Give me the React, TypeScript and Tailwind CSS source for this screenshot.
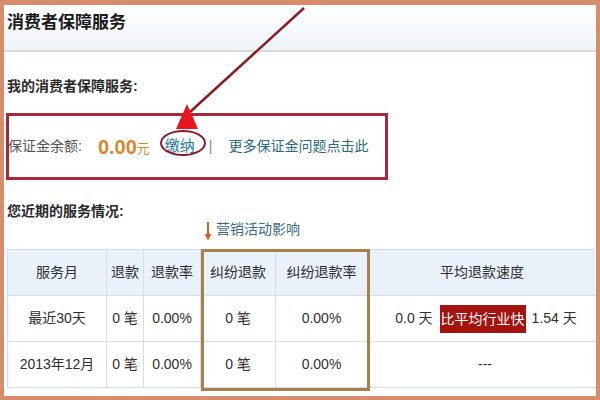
import React from "react";

const font = { fontFamily: '"Liberation Sans", "Noto Sans CJK SC", sans-serif' };

const cols = "grid grid-cols-[99px_37px_57px_75px_92px_228px]";

function Cell({ children, last = false }: { children: React.ReactNode; last?: boolean }) {
  return (
    <div
      className={`flex items-center justify-center h-[46px] border-b border-[#d6dde6] ${
        last ? "" : "border-r"
      } text-[14px] text-[#2e2e2e]`}
    >
      {children}
    </div>
  );
}

export default function App() {
  return (
    <div
      className="relative w-[600px] h-[400px] bg-[#d98c6c] pt-[5px] px-[4px] pb-[4px] overflow-hidden"
      style={font}
    >
      <div className="relative h-full bg-white flex flex-col">
        {/* Header */}
        <div className="h-[47px] pl-[3px] pt-[6px] bg-linear-to-b from-white to-[#eef4fa] border-b-2 border-[#dcdcdc]">
          <div className="text-[17px] leading-[24px] font-bold text-[#1a1a1a]">消费者保障服务</div>
        </div>

        <div className="mt-[24px] pl-[3px] h-[20px] leading-[20px] text-[14px] font-bold text-[#2a2a2a]">
          我的消费者保障服务:
        </div>

        {/* Red box */}
        <div className="mt-[17px] ml-[2px] w-[382px] h-[67px] border-[3px] border-[#a52a3a] flex items-center">
          <span className="ml-[-1px] text-[14px] text-[#555]">保证金余额:</span>
          <span className="ml-[16px] text-[20px] font-bold text-[#d9892b]">0.00</span>
          <span className="text-[13px] text-[#d9892b] mt-[4px]">元</span>
          <span className="relative ml-[15px] text-[15px] text-[#2a78a0]">
            缴纳
            <span className="absolute left-[-5px] top-[-5px] w-[46px] h-[26px] rounded-[50%] border-2 border-[#8c1a2a]" />
          </span>
          <span className="ml-[14px] text-[14px] text-[#888]">|</span>
          <span className="ml-[16px] text-[14px] text-[#2b6a7e]">更多保证金问题点击此</span>
        </div>

        <div className="mt-[22px] pl-[3px] h-[18px] leading-[18px] text-[14px] font-bold text-[#2a2a2a]">
          您近期的服务情况:
        </div>

        <div className="h-[18px] pl-[200px] flex items-center">
          <svg width="8" height="19" viewBox="0 0 8 19" className="mt-[4px]">
            <line x1="4" y1="0" x2="4" y2="15" stroke="#c8622a" strokeWidth="2" />
            <path d="M0.5 12 L4 18.5 L7.5 12 Z" fill="#c8622a" />
          </svg>
          <span className="ml-[4px] text-[14px] text-[#3a6a80]">营销活动影响</span>
        </div>

        {/* Table */}
        <div className="relative mt-[11px] ml-[3px] w-[588px] border-t border-l border-[#d6dde6]">
          <div className={`${cols} bg-[#e9f2fb]`}>
            <Cell>服务月</Cell>
            <Cell>退款</Cell>
            <Cell>退款率</Cell>
            <Cell>纠纷退款</Cell>
            <Cell>纠纷退款率</Cell>
            <Cell last>平均退款速度</Cell>
          </div>
          <div className={cols}>
            <Cell>最近30天</Cell>
            <Cell>0 笔</Cell>
            <Cell>0.00%</Cell>
            <Cell>0 笔</Cell>
            <Cell>0.00%</Cell>
            <Cell last>
              <span className="ml-[8px]">0.0 天</span>
              <span className="ml-[7px] bg-[#a3140f] text-white px-[1px] h-[28px] leading-[28px]">比平均行业快</span>
              <span className="ml-[6px]">1.54 天</span>
            </Cell>
          </div>
          <div className={cols}>
            <Cell>2013年12月</Cell>
            <Cell>0 笔</Cell>
            <Cell>0.00%</Cell>
            <Cell>0 笔</Cell>
            <Cell>0.00%</Cell>
            <Cell last>
              <span className="ml-[6px]">---</span>
            </Cell>
          </div>
          <div className="absolute left-[193px] top-[-1px] w-[169px] h-[142px] border-[3px] border-[#a8814a] pointer-events-none" />
        </div>
      </div>

      {/* Pointer arrow */}
      <svg
        className="absolute left-0 top-0 pointer-events-none"
        width="600"
        height="400"
        viewBox="0 0 600 400"
      >
        <line x1="304" y1="8" x2="190" y2="112" stroke="#8a1c24" strokeWidth="2.5" />
        <path d="M187 104 L176 129 L198 129 Z" fill="#e8141e" />
      </svg>
    </div>
  );
}
